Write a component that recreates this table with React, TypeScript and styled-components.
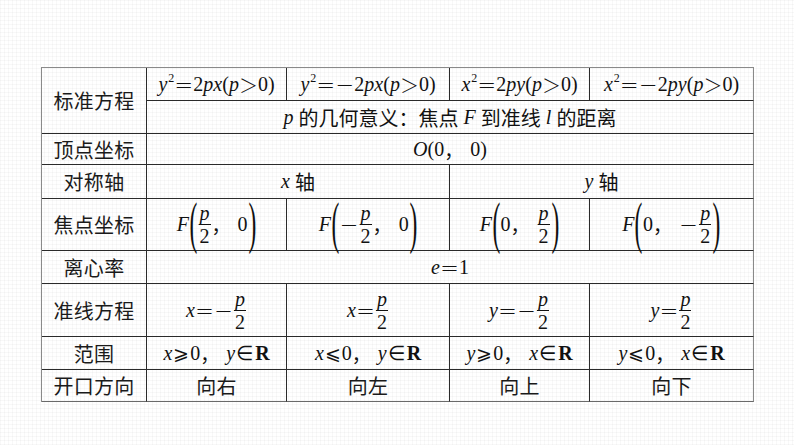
import React from "react";
import styled, { createGlobalStyle } from "styled-components";

const Global = createGlobalStyle`
  html, body { margin: 0; padding: 0; }
  body {
    background-color: #ffffff;
    background-image:
      linear-gradient(to right, rgba(0,0,0,0.028) 1px, transparent 1px),
      linear-gradient(to bottom, rgba(0,0,0,0.028) 1px, transparent 1px);
    background-size: 4px 4px;
  }
`;

const Page = styled.div`
  width: 794px;
  height: 445px;
  box-sizing: border-box;
  padding: 67px 0 0 41px;
`;

const Grid = styled.div`
  display: grid;
  width: 713px;
  grid-template-columns: 105px 140px 163px 140px 164px;
  grid-template-rows: 33px 33px 31px 34px 52px 33px 53px 33px 32px;
  border-top: 1px solid #8a8a8a;
  border-left: 1px solid #8a8a8a;
  box-sizing: border-box;
`;

const Cell = styled.div<{ $cs?: number; $rs?: number; $lastCol?: boolean; $lastRow?: boolean }>`
  grid-column: span ${(p) => p.$cs ?? 1};
  grid-row: span ${(p) => p.$rs ?? 1};
  box-sizing: border-box;
  border-right: 1px solid ${(p) => (p.$lastCol ? "#8a8a8a" : "#2a2a2a")};
  border-bottom: 1px solid ${(p) => (p.$lastRow ? "#6a6a6a" : "#2a2a2a")};
  display: flex;
  align-items: center;
  justify-content: center;
  font-family: "Liberation Serif", "Noto Sans CJK SC", serif;
  font-size: 19px;
  color: #111;
  white-space: nowrap;
`;

const Label = styled.span`
  font-family: "Noto Sans CJK SC", sans-serif;
  font-size: 20px;
  font-weight: 400;
  color: #1a1a1a;
  letter-spacing: 0.3px;
`;

const Math = styled.span`
  display: inline-flex;
  align-items: center;
  font-family: "Liberation Serif", serif;
  font-size: 20px;
`;

const V = styled.i`
  font-family: "Liberation Serif", serif;
  font-style: italic;
`;

const Sup = styled.span`
  display: inline-block;
  font-size: 12px;
  line-height: 1;
  position: relative;
  top: -6px;
  margin-left: 1px;
`;

const Op = styled.span`
  font-family: "Noto Sans CJK SC", sans-serif;
  font-size: 19px;
  font-weight: 300;
`;

const Rel = styled.span`
  font-family: "DejaVu Serif", "Liberation Serif", serif;
  font-size: 19px;
  font-weight: 300;
  margin: 0 1px;
`;

const In = styled.span`
  font-family: "Liberation Serif", serif;
  font-size: 20px;
  margin: 0 2px 0 1px;
`;

const Comma = styled.span`
  font-family: "Noto Sans CJK SC", sans-serif;
  font-size: 19px;
  margin-right: 2px;
`;

const Bold = styled.b`
  font-family: "Liberation Serif", serif;
  font-weight: bold;
  font-size: 20px;
`;

const Frac = styled.span`
  display: inline-flex;
  flex-direction: column;
  align-items: center;
  line-height: 20px;
  margin: 0 1px;
`;

const Num = styled.span`
  border-bottom: 1px solid #111;
  padding: 0 1px 1px;
`;

const Den = styled.span`
  padding-top: 1px;
`;

const Paren = styled.span`
  display: inline-block;
  font-family: "Liberation Serif", serif;
  font-size: 56px;
  font-weight: 300;
  line-height: 46px;
  height: 46px;
  transform: scaleX(0.42);
  margin: 0 -5px;
  position: relative;
  top: -2px;
`;

const Zh = styled.span`
  font-family: "Noto Sans CJK SC", sans-serif;
  font-size: 20px;
`;

const P2 = ({ neg }: { neg?: boolean }) => (
  <>
    {neg && <Op>－</Op>}
    <Frac>
      <Num>
        <V>p</V>
      </Num>
      <Den>2</Den>
    </Frac>
  </>
);

const Eq = ({ a, b }: { a: string; b: string }) => (
  <Math>
    <V>{a}</V>
    <Sup>2</Sup>
    <Op>＝</Op>
    {b.startsWith("-") && <Op>－</Op>}
    2<V>p</V>
    <V>{b.replace("-", "")}</V>(<V>p</V>
    <Op>＞</Op>0)
  </Math>
);

const Focus = ({ first, neg }: { first: boolean; neg?: boolean }) => (
  <Math>
    <V>F</V>
    <Paren>(</Paren>
    {first ? (
      <>
        <P2 neg={neg} />
        <Comma>，</Comma>
        &nbsp;0
      </>
    ) : (
      <>
        0<Comma>，</Comma>&nbsp;
        <P2 neg={neg} />
      </>
    )}
    <Paren>)</Paren>
  </Math>
);

const Directrix = ({ v, neg }: { v: string; neg?: boolean }) => (
  <Math>
    <V>{v}</V>
    <Op>＝</Op>
    <P2 neg={neg} />
  </Math>
);

const Range = ({ a, rel, b }: { a: string; rel: string; b: string }) => (
  <Math>
    <V>{a}</V>
    <Rel>{rel}</Rel>0<Comma>，</Comma>&nbsp;<V>{b}</V>
    <In>∈</In>
    <Bold>R</Bold>
  </Math>
);

export default function App() {
  return (
    <>
      <Global />
      <Page>
        <Grid>
          <Cell $rs={2}>
            <Label>标准方程</Label>
          </Cell>
          <Cell>
            <Eq a="y" b="x" />
          </Cell>
          <Cell>
            <Eq a="y" b="-x" />
          </Cell>
          <Cell>
            <Eq a="x" b="y" />
          </Cell>
          <Cell $lastCol>
            <Eq a="x" b="-y" />
          </Cell>
          <Cell $cs={4} $lastCol>
            <Math>
              <V>p</V>&nbsp;<Zh>的几何意义：焦点</Zh>&nbsp;<V>F</V>&nbsp;<Zh>到准线</Zh>&nbsp;
              <V>l</V>&nbsp;<Zh>的距离</Zh>
            </Math>
          </Cell>

          <Cell>
            <Label>顶点坐标</Label>
          </Cell>
          <Cell $cs={4} $lastCol>
            <Math>
              <V>O</V>(0<Comma>，</Comma>&nbsp;0)
            </Math>
          </Cell>

          <Cell>
            <Label>对称轴</Label>
          </Cell>
          <Cell $cs={2}>
            <Math>
              <V>x</V>&nbsp;<Zh>轴</Zh>
            </Math>
          </Cell>
          <Cell $cs={2} $lastCol>
            <Math>
              <V>y</V>&nbsp;<Zh>轴</Zh>
            </Math>
          </Cell>

          <Cell>
            <Label>焦点坐标</Label>
          </Cell>
          <Cell>
            <Focus first />
          </Cell>
          <Cell>
            <Focus first neg />
          </Cell>
          <Cell>
            <Focus first={false} />
          </Cell>
          <Cell $lastCol>
            <Focus first={false} neg />
          </Cell>

          <Cell>
            <Label>离心率</Label>
          </Cell>
          <Cell $cs={4} $lastCol>
            <Math>
              <V>e</V>
              <Op>＝</Op>1
            </Math>
          </Cell>

          <Cell>
            <Label>准线方程</Label>
          </Cell>
          <Cell>
            <Directrix v="x" neg />
          </Cell>
          <Cell>
            <Directrix v="x" />
          </Cell>
          <Cell>
            <Directrix v="y" neg />
          </Cell>
          <Cell $lastCol>
            <Directrix v="y" />
          </Cell>

          <Cell>
            <Label>范围</Label>
          </Cell>
          <Cell>
            <Range a="x" rel="⩾" b="y" />
          </Cell>
          <Cell>
            <Range a="x" rel="⩽" b="y" />
          </Cell>
          <Cell>
            <Range a="y" rel="⩾" b="x" />
          </Cell>
          <Cell $lastCol>
            <Range a="y" rel="⩽" b="x" />
          </Cell>

          <Cell $lastRow>
            <Label>开口方向</Label>
          </Cell>
          <Cell $lastRow>
            <Label>向右</Label>
          </Cell>
          <Cell $lastRow>
            <Label>向左</Label>
          </Cell>
          <Cell $lastRow>
            <Label>向上</Label>
          </Cell>
          <Cell $lastRow $lastCol>
            <Label>向下</Label>
          </Cell>
        </Grid>
      </Page>
    </>
  );
}
